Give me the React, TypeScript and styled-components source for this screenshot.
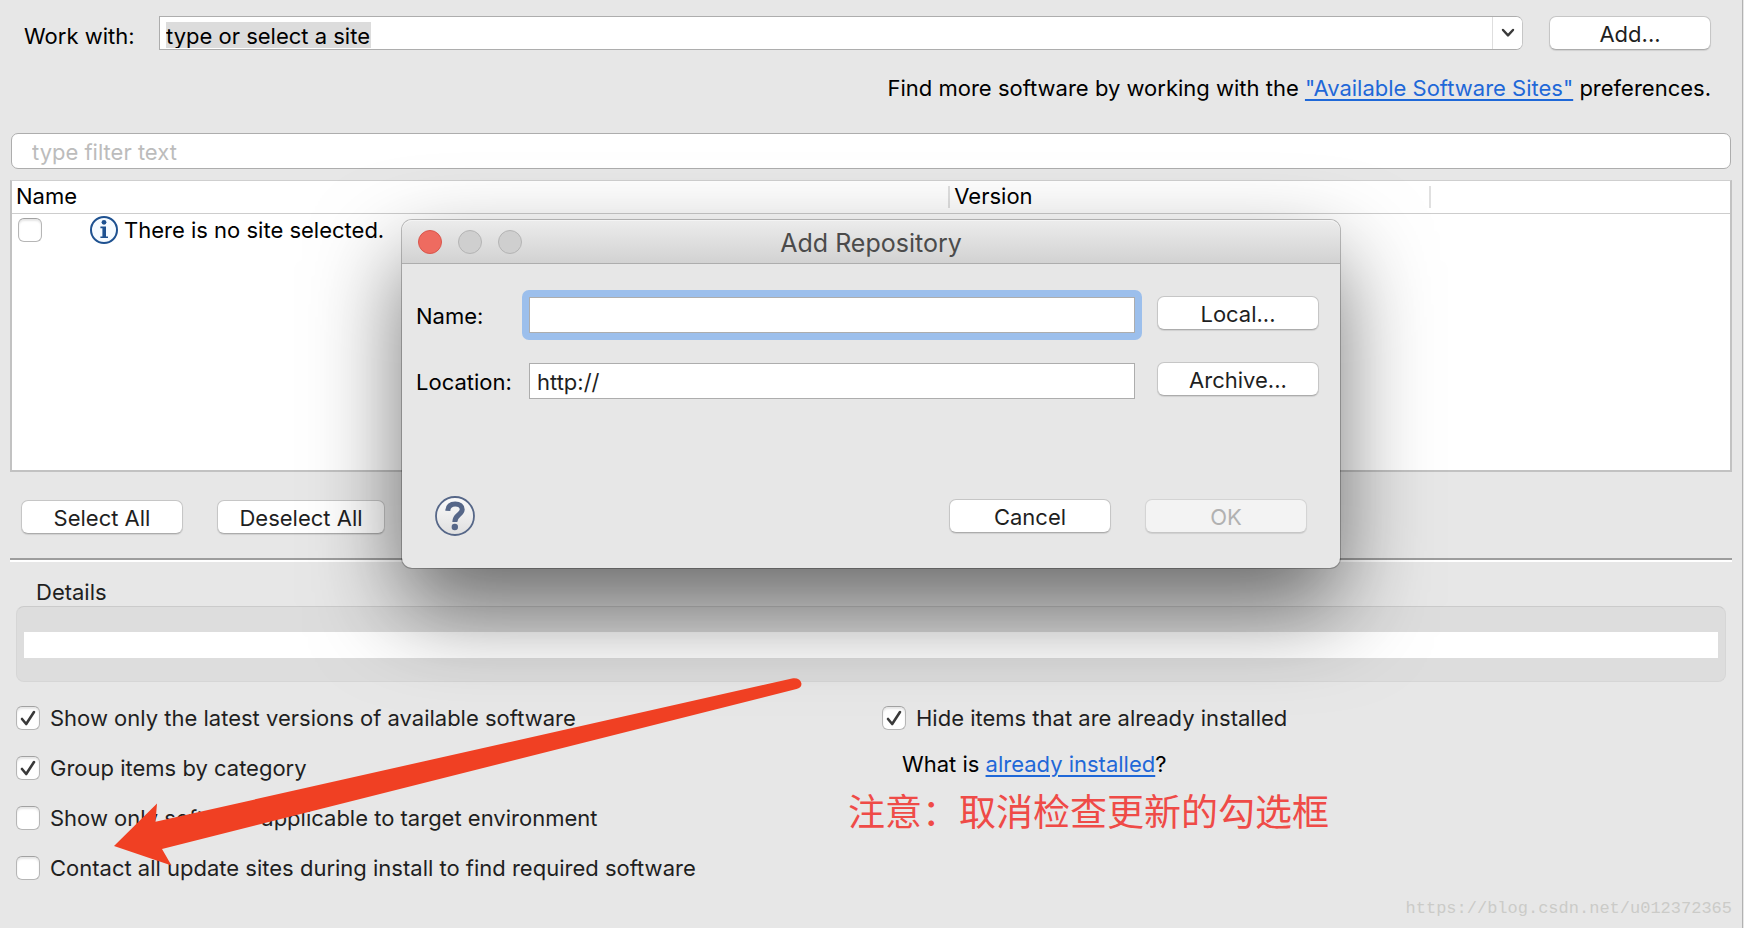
import React from "react";
import styled, { createGlobalStyle, css } from "styled-components";

const GlobalStyle = createGlobalStyle`
  *, *::before, *::after { box-sizing: border-box; }
  body {
    margin: 0;
    background: #e7e7e7;
    color: #000;
    font-family: Inter, "Liberation Sans", sans-serif;
    font-size: 22px;
    line-height: 26px;
  }
  button, input { font: inherit; color: inherit; margin: 0; }
`;

const Page = styled.main`
  position: relative;
  min-height: 100vh;
  margin-right: 1px;
  padding: 16px 10px 0;
  border-right: 1px solid #b2b2b2;
  background: #e7e7e7;
`;

const PushButton = styled.button<{ $width?: number }>`
  width: ${({ $width = 162 }) => $width}px;
  height: 34px;
  padding: 2px 0 0;
  border: 1px solid #c6c6c6;
  border-bottom-color: #acacac;
  border-radius: 7px;
  background: #fff;
  box-shadow: 0 1px 1px rgba(0, 0, 0, 0.1);
  color: #1f1f1f;
  line-height: 30px;
  &:disabled {
    border-color: #d4d4d4;
    border-bottom-color: #c6c6c6;
    background: #f3f3f3;
    color: #b1b1b1;
  }
`;

const TextLink = styled.a`
  color: #1f68d8;
  text-decoration: underline;
  text-decoration-thickness: 2px;
  text-underline-offset: 3px;
`;

const SiteRow = styled.div`
  display: flex;
  align-items: flex-start;
  padding: 0 21px 0 14px;
`;

const SiteLabel = styled.label`
  width: 135px;
  padding-top: 7px;
`;

const Combo = styled.div`
  flex: 1;
  display: flex;
  height: 34px;
  margin-right: 26px;
  border: 1px solid #adadad;
  border-right-color: #c6c6c6;
  border-radius: 0 7px 7px 0;
  background: #fff;
  overflow: hidden;
`;

const ComboInput = styled.input`
  field-sizing: content;
  height: 26px;
  margin: 5px auto 0 6px;
  padding: 1px 1px 0 0;
  border: 0;
  outline: 0;
  background: #dcdcdc;
`;

const ComboArrow = styled.button`
  display: grid;
  place-items: center;
  width: 30px;
  padding: 0;
  border: 0;
  border-left: 1px solid #dedede;
  background: #fff;
`;

const SitesHint = styled.p`
  margin: 25px 0 32px;
  padding-right: 21px;
  text-align: right;
`;

const FilterInput = styled.input`
  display: block;
  width: calc(100% - 2px);
  height: 36px;
  margin: 0 1px 11px;
  padding: 2px 20px 0;
  border: 1px solid #adadad;
  border-radius: 7px;
  background: #fff;
  outline: 0;
  &::placeholder { color: #bcbcbc; opacity: 1; }
`;

const TableFrame = styled.div`
  min-height: 292px;
  border: 2px solid #c2c2c2;
  border-top: 1px solid #cfcfcf;
  background: #fff;
`;

const SoftwareTable = styled.table`
  width: 100%;
  border-collapse: separate;
  border-spacing: 0;
  table-layout: fixed;
`;

const HeadCell = styled.th<{ $width?: string; $divided?: boolean }>`
  width: ${({ $width }) => $width ?? "auto"};
  height: 33px;
  padding: 0;
  border-bottom: 1px solid #cdcdcd;
  font-weight: 400;
  text-align: left;
  span {
    display: block;
    height: 22px;
    padding-left: 4px;
    line-height: 20px;
    ${({ $divided }) => $divided && css`border-left: 2px solid #e0e0e0;`}
  }
`;

const ItemCell = styled.td`padding: 0;`;

const Item = styled.div`
  display: flex;
  align-items: center;
  height: 32px;
  padding-left: 6px;
  svg { margin: 0 6px 0 48px; }
`;

const Tick = styled.input`
  appearance: none;
  flex: none;
  width: 24px;
  height: 24px;
  border: 1px solid #b6b6b6;
  border-top-color: #a2a2a2;
  border-radius: 6px;
  background: #fff;
  box-shadow: inset 0 2px 2px rgba(0, 0, 0, 0.1);
`;

const TickBox = styled.span`
  display: grid;
  flex: none;
  > * { grid-area: 1 / 1; }
  svg { z-index: 1; pointer-events: none; display: none; margin: 0; }
  ${Tick}:checked + svg { display: block; }
`;

const SelectionBar = styled.div`
  display: flex;
  gap: 34px;
  padding: 28px 11px 24px;
`;

const Rule = styled.hr`
  height: 4px;
  margin: 0 0 17px;
  border: 0;
  border-top: 2px solid #9d9d9d;
  border-bottom: 2px solid #fff;
`;

const Details = styled.section`
  padding: 0 6px;
  color: #1f1f1f;
  h2 {
    margin: 0 0 1px;
    padding-left: 20px;
    font-size: 22px;
    font-weight: 400;
  }
`;

const DetailsBox = styled.div`
  padding: 25px 7px 23px;
  border: 1px solid #d6d6d6;
  border-top-color: #cbcbcb;
  border-radius: 8px;
  background: #dddddd;
`;

const DetailsText = styled.div`
  height: 26px;
  background: #fff;
`;

const Options = styled.section`
  display: grid;
  grid-template-columns: 1fr 1fr;
  column-gap: 6px;
  margin: 23px -10px 0 6px;
`;

const OptionList = styled.div`
  display: flex;
  flex-direction: column;
  align-items: flex-start;
  gap: 24px;
`;

const OptionLabel = styled.label`
  display: flex;
  align-items: center;
  gap: 10px;
  color: #1f1f1f;
  white-space: nowrap;
`;

const InstalledHint = styled.p`
  margin: 20px 0 0 20px;
`;

const Note = styled.p`
  margin: 13px 0 0 -34px;
  color: #ef4b47;
  font-family: "Noto Sans CJK SC", sans-serif;
  font-size: 37px;
  font-weight: 400;
  line-height: 40px;
  white-space: nowrap;
`;

const Watermark = styled.span`
  position: absolute;
  right: 10px;
  bottom: 7px;
  color: #cbcbc8;
  font-family: "Liberation Mono", monospace;
  font-size: 17px;
  line-height: 24px;
`;

const ArrowMark = styled.svg`
  position: absolute;
  left: 112px;
  top: 676px;
  pointer-events: none;
`;

const Dialog = styled.form`
  position: absolute;
  top: 220px;
  left: calc(50% - 469px);
  width: 938px;
  border-radius: 10px;
  background: #e7e7e7;
  box-shadow: 0 0 0 1px rgba(0, 0, 0, 0.24), 0 40px 90px rgba(0, 0, 0, 0.55);
`;

const TitleBar = styled.header`
  display: grid;
  grid-template-columns: 1fr auto 1fr;
  align-items: center;
  height: 44px;
  padding: 0 16px;
  border-bottom: 1px solid #adadad;
  border-radius: 10px 10px 0 0;
  background: linear-gradient(#ececec, #d2d2d2);
  box-shadow: inset 0 1px 0 #f4f4f4;
  h1 {
    margin: 0;
    padding-top: 3px;
    color: #4b4b4b;
    font-size: 25px;
    font-weight: 400;
    line-height: 30px;
  }
`;

const WindowButtons = styled.div`
  display: flex;
  gap: 16px;
`;

const WindowButton = styled.button<{ $close?: boolean }>`
  width: 24px;
  height: 24px;
  padding: 0;
  border: 1px solid ${({ $close }) => ($close ? "#d9564c" : "#b4b4b4")};
  border-radius: 50%;
  background: ${({ $close }) => ($close ? "#ee6b60" : "#cfcfcf")};
`;

const Fields = styled.div`
  display: grid;
  grid-template-columns: 113px 1fr 162px;
  row-gap: 29px;
  align-items: start;
  padding: 32px 21px 0 14px;
`;

const FieldLabel = styled.label`
  padding-top: 7px;
`;

const FieldFrame = styled.div<{ $focused?: boolean }>`
  position: relative;
  margin: 1px 22px 0 0;
  ${({ $focused }) =>
    $focused &&
    css`
      &::before {
        content: "";
        position: absolute;
        inset: -7px;
        border-radius: 7px;
        background: #9cbfec;
      }
    `}
`;

const FieldInput = styled.input`
  position: relative;
  display: block;
  width: 100%;
  height: 36px;
  padding: 2px 7px 0;
  border: 1px solid #adadad;
  border-radius: 0;
  outline: 0;
  background: #fff;
  color: #1f1f1f;
`;

const DialogFooter = styled.footer`
  display: flex;
  align-items: center;
  gap: 34px;
  padding: 97px 33px 32px;
`;

const HelpButton = styled.button`
  width: 40px;
  height: 40px;
  margin-right: auto;
  padding: 0;
  border: 0;
  background: none;
  svg { display: block; }
`;

function CheckBox({ id, checked, label }: { id?: string; checked?: boolean; label?: string }) {
  return (
    <TickBox>
      <Tick type="checkbox" id={id} defaultChecked={checked} aria-label={label} />
      <svg width="24" height="24" viewBox="0 0 24 24" fill="none" aria-hidden="true">
        <path d="M6 13 L10.2 18 L18 6" stroke="#3a3a3a" strokeWidth="2.6" strokeLinecap="round" strokeLinejoin="round" />
      </svg>
    </TickBox>
  );
}

function Option({ id, checked, children }: { id: string; checked?: boolean; children: React.ReactNode }) {
  return (
    <OptionLabel htmlFor={id}>
      <CheckBox id={id} checked={checked} />
      {children}
    </OptionLabel>
  );
}

function InfoIcon() {
  return (
    <svg width="28" height="28" viewBox="0 0 28 28" aria-hidden="true">
      <circle cx="14" cy="14" r="13" fill="#f6fbff" stroke="#1e5190" strokeWidth="2" />
      <circle cx="14" cy="6.3" r="2.4" fill="#1e5190" />
      <path d="M10.4 10.6 H16 V20.4 H18 V22 H10.4 V20.4 H12.4 V12.2 H10.4 Z" fill="#1e5190" />
    </svg>
  );
}

function HelpIcon() {
  return (
    <svg width="40" height="40" viewBox="0 0 40 40" fill="none" aria-hidden="true">
      <defs>
        <linearGradient id="helpFill" x1="0" y1="0" x2="0" y2="1">
          <stop offset="0" stopColor="#fbfbfb" />
          <stop offset="1" stopColor="#dfdfdf" />
        </linearGradient>
      </defs>
      <circle cx="20" cy="20" r="19" fill="url(#helpFill)" stroke="#566788" strokeWidth="1.8" />
      <path d="M12.8 14.8 C13 10 16 8 20.2 8 C24.6 8 27.2 10.2 27.2 13.6 C27.2 18.8 19.8 18.4 19.8 26" stroke="#566788" strokeWidth="5" />
      <circle cx="19.8" cy="31" r="3.2" fill="#566788" />
    </svg>
  );
}

export default function App() {
  return (
    <>
      <GlobalStyle />
      <Page>
        <SiteRow>
          <SiteLabel htmlFor="site">Work with:</SiteLabel>
          <Combo>
            <ComboInput id="site" defaultValue="type or select a site" />
            <ComboArrow type="button" aria-label="Show sites">
              <svg width="14" height="10" viewBox="0 0 14 10" fill="none">
                <path d="M2 2 L7 7.4 L12 2" stroke="#3a3a3a" strokeWidth="2.4" strokeLinecap="round" strokeLinejoin="round" />
              </svg>
            </ComboArrow>
          </Combo>
          <PushButton type="button">Add...</PushButton>
        </SiteRow>

        <SitesHint>
          Find more software by working with the <TextLink href="#sites">"Available Software Sites"</TextLink> preferences.
        </SitesHint>

        <FilterInput type="text" placeholder="type filter text" aria-label="Filter" />

        <TableFrame>
          <SoftwareTable>
            <thead>
              <tr>
                <HeadCell $width="54.5%"><span>Name</span></HeadCell>
                <HeadCell $width="28%" $divided><span>Version</span></HeadCell>
                <HeadCell $divided><span /></HeadCell>
              </tr>
            </thead>
            <tbody>
              <tr>
                <ItemCell colSpan={3}>
                  <Item>
                    <CheckBox label="There is no site selected." />
                    <InfoIcon />
                    There is no site selected.
                  </Item>
                </ItemCell>
              </tr>
            </tbody>
          </SoftwareTable>
        </TableFrame>

        <SelectionBar>
          <PushButton type="button">Select All</PushButton>
          <PushButton type="button" $width={168}>Deselect All</PushButton>
        </SelectionBar>

        <Rule />

        <Details>
          <h2>Details</h2>
          <DetailsBox>
            <DetailsText />
          </DetailsBox>
        </Details>

        <Options>
          <OptionList>
            <Option id="latest" checked>Show only the latest versions of available software</Option>
            <Option id="group" checked>Group items by category</Option>
            <Option id="target">Show only software applicable to target environment</Option>
            <Option id="contact">Contact all update sites during install to find required software</Option>
          </OptionList>
          <div>
            <Option id="hide" checked>Hide items that are already installed</Option>
            <InstalledHint>
              What is <TextLink href="#installed">already installed</TextLink>?
            </InstalledHint>
            <Note lang="zh-CN">注意：取消检查更新的勾选框</Note>
          </div>
        </Options>

        <Dialog role="dialog" aria-labelledby="dialog-title">
          <TitleBar>
            <WindowButtons>
              <WindowButton type="button" $close aria-label="Close" />
              <WindowButton type="button" disabled aria-label="Minimize" />
              <WindowButton type="button" disabled aria-label="Zoom" />
            </WindowButtons>
            <h1 id="dialog-title">Add Repository</h1>
          </TitleBar>
          <Fields>
            <FieldLabel htmlFor="repo-name">Name:</FieldLabel>
            <FieldFrame $focused>
              <FieldInput id="repo-name" type="text" />
            </FieldFrame>
            <PushButton type="button">Local...</PushButton>
            <FieldLabel htmlFor="repo-location">Location:</FieldLabel>
            <FieldFrame>
              <FieldInput id="repo-location" type="text" defaultValue="http://" />
            </FieldFrame>
            <PushButton type="button">Archive...</PushButton>
          </Fields>
          <DialogFooter>
            <HelpButton type="button" aria-label="Help"><HelpIcon /></HelpButton>
            <PushButton type="button">Cancel</PushButton>
            <PushButton type="submit" disabled>OK</PushButton>
          </DialogFooter>
        </Dialog>

        <ArrowMark width="692" height="192" viewBox="112 676 692 192" aria-hidden="true">
          <path
            d="M114 846 L157 803.5 L155.5 821.8 L792 678.4 C797 677.4 800.5 679.5 801.3 683 C802 686 800 688 796.5 689 L162 849 L171.5 865.5 Z"
            fill="#f04023"
          />
        </ArrowMark>

        <Watermark>https://blog.csdn.net/u012372365</Watermark>
      </Page>
    </>
  );
}
